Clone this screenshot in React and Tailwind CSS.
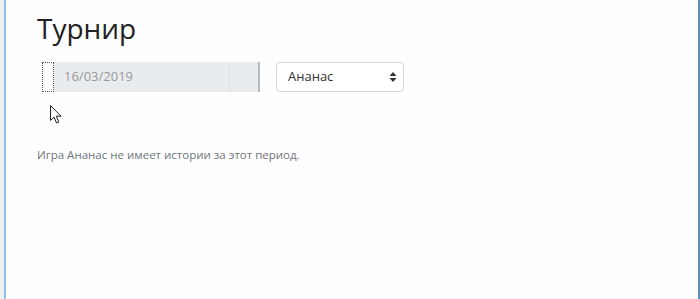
import React from 'react';

function SortArrows() {
    return (
        <svg width="8" height="12" viewBox="0 0 8 12" className="text-[#333]">
            <path d="M4 1 L7.5 5 H0.5 Z" fill="currentColor" />
            <path d="M4 11 L7.5 7 H0.5 Z" fill="currentColor" />
        </svg>
    );
}

function Cursor() {
    return (
        <svg width="13" height="19" viewBox="0 0 13 19" className="absolute left-[50px] top-[105px]">
            <path
                d="M0.5 0.5 V15.5 L4 12 L6.5 18 L8.8 17 L6.3 11.2 H11 Z"
                fill="#fff"
                stroke="#222"
                strokeWidth="1"
                strokeLinejoin="round"
            />
        </svg>
    );
}

export default function App() {
    return (
        <div
            className="relative h-[299px] w-[700px] overflow-hidden bg-white"
            style={{ fontFamily: '"Open Sans", "Noto Sans", sans-serif' }}
        >
            <div className="flex h-full">
                <div className="w-[4px] bg-[#eef0f2]" />
                <div className="w-[2px] bg-[#8ec4ee]" />
                <div className="flex-1 bg-[#fefefe] pl-[31px] pt-[6px]">
                    <h1 className="text-[28px] leading-[44px] text-[#222]">Турнир</h1>

                    <div className="mt-[12px] flex items-center">
                        <div className="ml-[5px] h-[30px] w-[12px] border border-dotted border-[#555]" />
                        <div className="flex h-[30px] w-[175px] items-center bg-[#e9ecef] pl-[10px] text-[13px] text-[#999]">
                            16/03/2019
                        </div>
                        <div className="h-[30px] w-[31px] border-l border-r-2 border-l-[#dde0e3] border-r-[#b8bbbe] bg-[#e9ecef]" />
                        <div className="ml-[16px] flex h-[30px] w-[128px] items-center justify-between rounded-[4px] border border-[#d5d8db] bg-white pl-[11px] pr-[6px] text-[13px] text-[#333]">
                            <span>Ананас</span>
                            <SortArrows />
                        </div>
                    </div>

                    <p className="mt-[54px] text-[11.5px] text-[#6f757b]">
                        Игра Ананас не имеет истории за этот период.
                    </p>
                </div>
                <div className="w-[2px] bg-[#5f8fb9]" />
            </div>
            <Cursor />
        </div>
    );
}
